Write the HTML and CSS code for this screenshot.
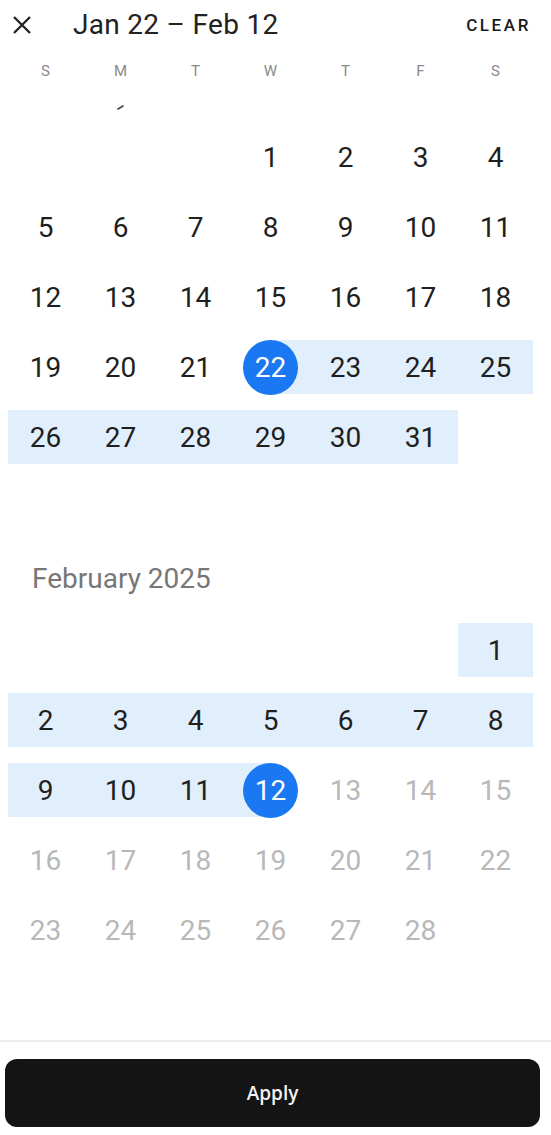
FILE: index.html
```html
<!DOCTYPE html>
<html lang="en">
<head>
<meta charset="utf-8">
<title>Date range</title>
<link rel="stylesheet" href="styles.css">
</head>
<body>
<div class="page">
  <header class="header">
    <button class="close" aria-label="Close">
      <svg width="20" height="20" viewBox="0 0 20 20"><path d="M2 2 L18 18 M18 2 L2 18" stroke="#222" stroke-width="2.3" stroke-linecap="butt" fill="none"/></svg>
    </button>
    <h1 class="title">Jan 22 – Feb 12</h1>
    <button class="clear">CLEAR</button>
  </header>

  <div class="weekdays">
    <span>S</span><span>M</span><span>T</span><span>W</span><span>T</span><span>F</span><span>S</span>
  </div>

  <div class="peek">
    <svg class="tick" width="8" height="6" viewBox="0 0 8 6"><path d="M1 5 L6 2" stroke="#444" stroke-width="1.6" stroke-linecap="round"/></svg>
  </div>

  <section class="month">
    <div class="grid">
      <span class="cell"></span><span class="cell"></span><span class="cell"></span>
      <span class="cell">1</span><span class="cell">2</span><span class="cell">3</span><span class="cell">4</span>
      <span class="cell">5</span><span class="cell">6</span><span class="cell">7</span><span class="cell">8</span><span class="cell">9</span><span class="cell">10</span><span class="cell">11</span>
      <span class="cell">12</span><span class="cell">13</span><span class="cell">14</span><span class="cell">15</span><span class="cell">16</span><span class="cell">17</span><span class="cell">18</span>
      <span class="cell">19</span><span class="cell">20</span><span class="cell">21</span><span class="cell start"><span class="dot">22</span></span><span class="cell range">23</span><span class="cell range">24</span><span class="cell range">25</span>
      <span class="cell range">26</span><span class="cell range">27</span><span class="cell range">28</span><span class="cell range">29</span><span class="cell range">30</span><span class="cell range">31</span><span class="cell"></span>
    </div>
  </section>

  <section class="month feb">
    <h2 class="month-title">February 2025</h2>
    <div class="grid">
      <span class="cell"></span><span class="cell"></span><span class="cell"></span><span class="cell"></span><span class="cell"></span><span class="cell"></span>
      <span class="cell range">1</span>
      <span class="cell range">2</span><span class="cell range">3</span><span class="cell range">4</span><span class="cell range">5</span><span class="cell range">6</span><span class="cell range">7</span><span class="cell range">8</span>
      <span class="cell range">9</span><span class="cell range">10</span><span class="cell range">11</span><span class="cell end"><span class="dot">12</span></span><span class="cell off">13</span><span class="cell off">14</span><span class="cell off">15</span>
      <span class="cell off">16</span><span class="cell off">17</span><span class="cell off">18</span><span class="cell off">19</span><span class="cell off">20</span><span class="cell off">21</span><span class="cell off">22</span>
      <span class="cell off">23</span><span class="cell off">24</span><span class="cell off">25</span><span class="cell off">26</span><span class="cell off">27</span><span class="cell off">28</span><span class="cell"></span>
    </div>
  </section>

  <footer class="footer">
    <button class="apply">Apply</button>
  </footer>
</div>
</body>
</html>
```

FILE: styles.css
```css
* { box-sizing: border-box; }

html, body {
  margin: 0;
  padding: 0;
  background: #ffffff;
}

body {
  font-family: Roboto, "Liberation Sans", sans-serif;
  color: #1f1f1f;
  width: 551px;
  height: 1135px;
  overflow: hidden;
}

.page {
  display: flex;
  flex-direction: column;
  height: 1135px;
}

.header {
  display: flex;
  align-items: center;
  height: 48px;
  padding: 0 22px 0 12px;
}

.close {
  border: 0;
  background: none;
  padding: 0;
  width: 20px;
  height: 20px;
  display: flex;
  margin-top: 1px;
}

.title {
  margin: 0 0 0 41px;
  font-size: 28px;
  font-weight: 400;
  color: #222;
  flex: 1;
  letter-spacing: 0.3px;
}

.clear {
  border: 0;
  background: none;
  padding: 0;
  font-family: Roboto, "Liberation Sans", sans-serif;
  font-size: 17px;
  font-weight: 500;
  letter-spacing: 2.6px;
  color: #1a1a1a;
  margin-top: 2px;
  margin-right: -2px;
}

.weekdays {
  display: grid;
  grid-template-columns: repeat(7, 75px);
  margin: 13px 0 0 8px;
  height: 20px;
  align-items: center;
  font-size: 15px;
  color: #8a8a8a;
}

.weekdays span { text-align: center; }

.peek {
  height: 41px;
  padding: 23px 0 0 117px;
}

.tick { display: block; }

.grid {
  display: grid;
  grid-template-columns: repeat(7, 75px);
  grid-auto-rows: 70px;
  margin-left: 8px;
}

.cell {
  display: flex;
  align-items: center;
  justify-content: center;
  font-size: 28px;
  color: #1f1f1f;
}

.range {
  background: linear-gradient(#e1eefb, #e1eefb) center / 100% 54px no-repeat;
}

.start {
  background: linear-gradient(#e1eefb, #e1eefb) right center / 50% 54px no-repeat;
}

.end {
  background: linear-gradient(#e1eefb, #e1eefb) left center / 50% 54px no-repeat;
}

.dot {
  width: 55px;
  height: 55px;
  border-radius: 50%;
  background: #1a78f2;
  color: #ffffff;
  display: flex;
  align-items: center;
  justify-content: center;
}

.off { color: #b8b8b8; }

.month-title {
  margin: 92px 0 21px 32px;
  height: 30px;
  line-height: 30px;
  font-size: 28px;
  font-weight: 400;
  color: #777777;
}

.footer {
  margin-top: auto;
  border-top: 2px solid #ececec;
  padding: 17px 11px 8px 5px;
}

.apply {
  display: block;
  width: 100%;
  height: 68px;
  border: 0;
  border-radius: 12px;
  background: #141414;
  color: #f2f2f2;
  font-family: "Open Sans", "Liberation Sans", sans-serif;
  font-size: 19px;
  font-weight: 600;
}
```
